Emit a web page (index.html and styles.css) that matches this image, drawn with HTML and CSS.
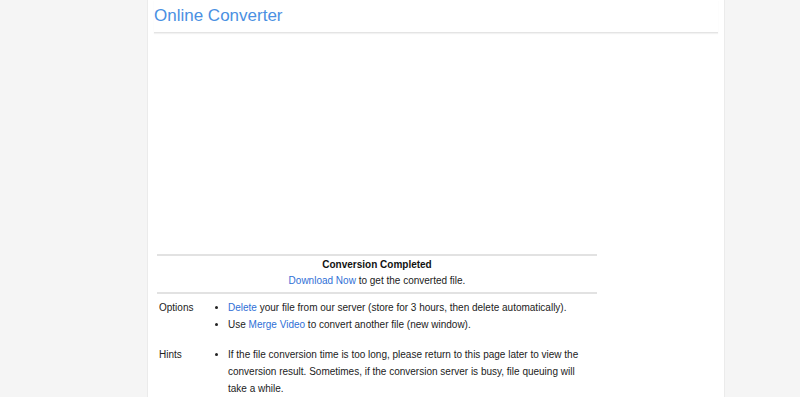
FILE: index.html
```html
<!DOCTYPE html>
<html lang="en">
<head>
    <meta charset="UTF-8">
    <meta name="viewport" content="width=device-width, initial-scale=1.0">
    <title>Online Converter</title>
    <link rel="stylesheet" href="styles.css">
</head>
<body>
    <div class="page">
        <div class="header">
            <h1>Online Converter</h1>
        </div>

        <!-- ad space -->
        <div class="ad-space"></div>

        <table class="result">
            <tr>
                <td colspan="2" class="status">
                    <div class="status-title">Conversion Completed</div>
                    <div><a href="#">Download Now</a> to get the converted file.</div>
                </td>
            </tr>
            <tr>
                <td class="label">Options</td>
                <td>
                    <ul>
                        <li><a href="#">Delete</a> your file from our server (store for 3 hours, then delete automatically).</li>
                        <li>Use <a href="#">Merge Video</a> to convert another file (new window).</li>
                    </ul>
                </td>
            </tr>
            <tr>
                <td class="label">Hints</td>
                <td>
                    <ul>
                        <li>If the file conversion time is too long, please return to this page later to view the conversion result. Sometimes, if the conversion server is busy, file queuing will take a while.</li>
                    </ul>
                </td>
            </tr>
        </table>
    </div>
</body>
</html>
```
FILE: styles.css
```css
body {
    font-family: "Liberation Sans", Arial, sans-serif;
    background-color: #f5f5f5;
    color: #222;
    margin: 0;
    padding: 0;
}

a {
    color: #2f6fd6;
    text-decoration: none;
}

.page {
    margin-left: 147px;
    width: 564px;
    min-height: 100vh;
    padding: 0 6px;
    background-color: #fff;
    border-left: 1px solid #ebebeb;
    border-right: 1px solid #ebebeb;
}

.header {
    border-bottom: 1px solid #e4e4e4;
    box-shadow: 0 1px 1px #f2f2f2;
}

.header h1 {
    margin: 0;
    padding: 6px 0 6px;
    font-size: 17px;
    font-weight: normal;
    line-height: 20px;
    color: #4a90e2;
}

.ad-space {
    height: 221px;
}

.result {
    width: 440px;
    margin-left: 3px;
    border-collapse: collapse;
    font-size: 10px;
    line-height: 17px;
}

.result td {
    vertical-align: top;
    padding: 0 0 0 2px;
}

.result .status {
    text-align: center;
    border-top: 2px solid #e2e2e2;
    border-bottom: 2px solid #e2e2e2;
    padding: 1px 0 3px;
    line-height: 16px;
}

.status-title {
    font-weight: bold;
    color: #111;
}

.result .label {
    width: 44px;
    padding-top: 5px;
}

.result ul {
    margin: 5px 0 8px;
    padding-left: 23px;
    padding-right: 16px;
}
```
